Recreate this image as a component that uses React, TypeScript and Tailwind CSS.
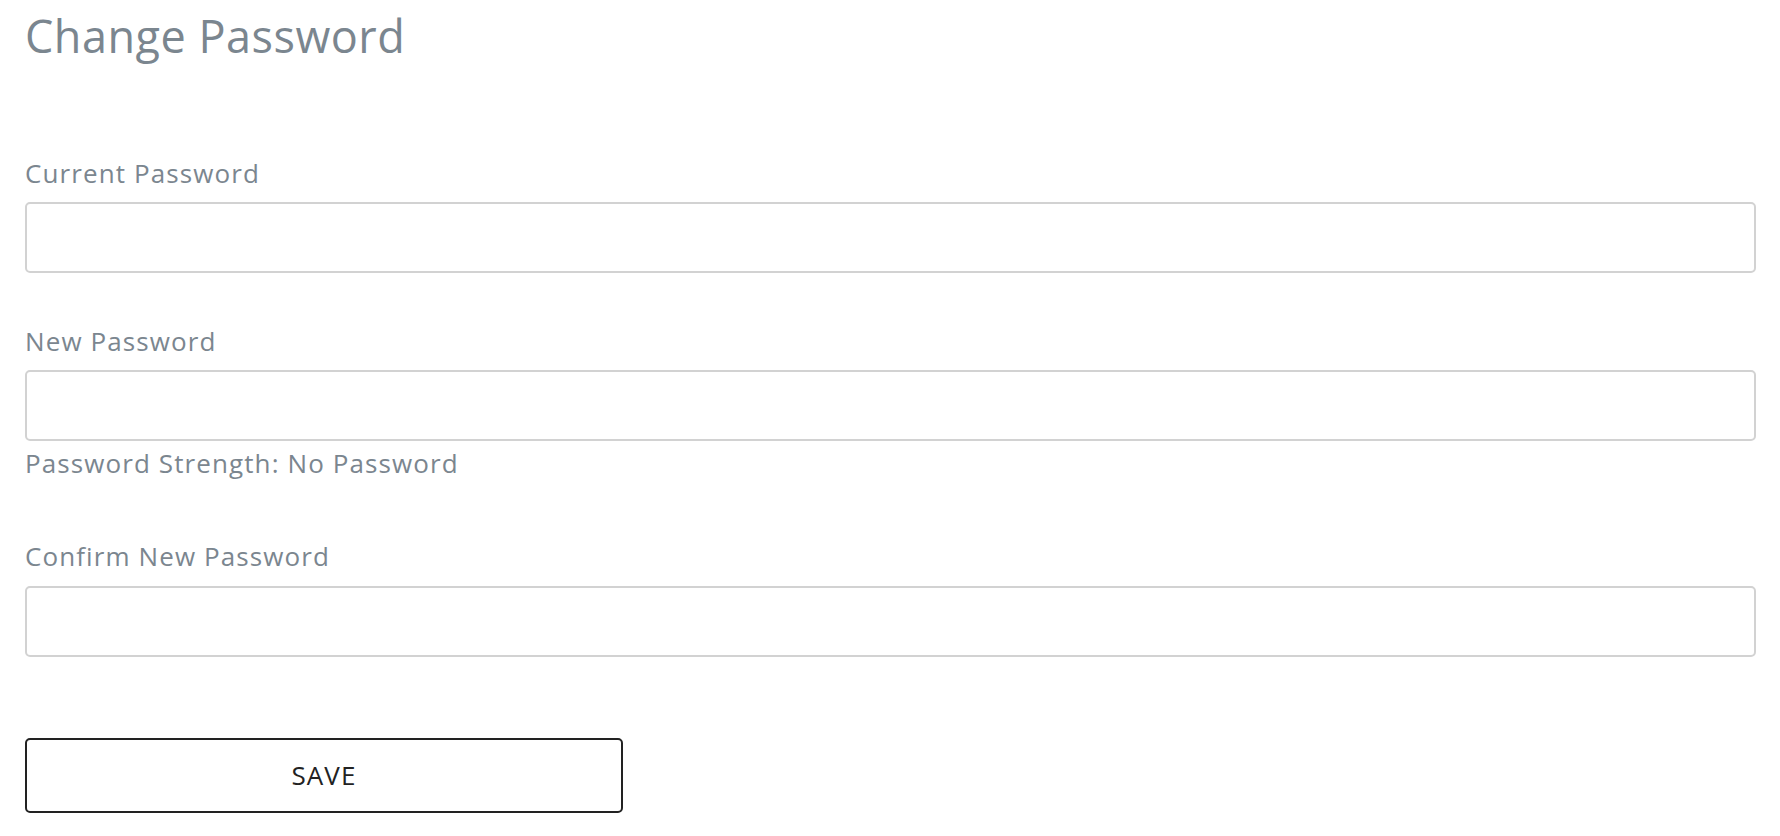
export default function App() {
  return (
    <div className="min-h-screen bg-white pl-[25px] pr-[24px] text-[#7b868f]" style={{ fontFamily: '"Open Sans", "Liberation Sans", sans-serif' }}>
      <h1 className="pt-[13px] text-[45px] leading-[45px] font-normal tracking-[0.5px]">Change Password</h1>

      <form className="flex flex-col" onSubmit={(e) => e.preventDefault()}>
        <label className="mt-[103px] text-[26px] leading-[25px] tracking-[1.1px]">Current Password</label>
        <input type="password" className="mt-[16px] h-[71px] w-full rounded-[5px] border-2 border-[#d2d2d2] bg-white px-4 outline-none" />

        <label className="mt-[56px] text-[26px] leading-[25px] tracking-[1.1px]">New Password</label>
        <input type="password" className="mt-[16px] h-[71px] w-full rounded-[5px] border-2 border-[#d2d2d2] bg-white px-4 outline-none" />
        <p className="mt-[10px] text-[26px] leading-[25px] tracking-[1.1px]">Password Strength: No Password</p>

        <label className="mt-[68px] text-[26px] leading-[25px] tracking-[1.1px]">Confirm New Password</label>
        <input type="password" className="mt-[17px] h-[71px] w-full rounded-[5px] border-2 border-[#d2d2d2] bg-white px-4 outline-none" />

        <button type="submit" className="mt-[81px] h-[75px] w-[598px] rounded-[5px] border-2 border-[#222] bg-white text-[26px] tracking-[1.1px] text-[#222]">
          SAVE
        </button>
      </form>
    </div>
  );
}
